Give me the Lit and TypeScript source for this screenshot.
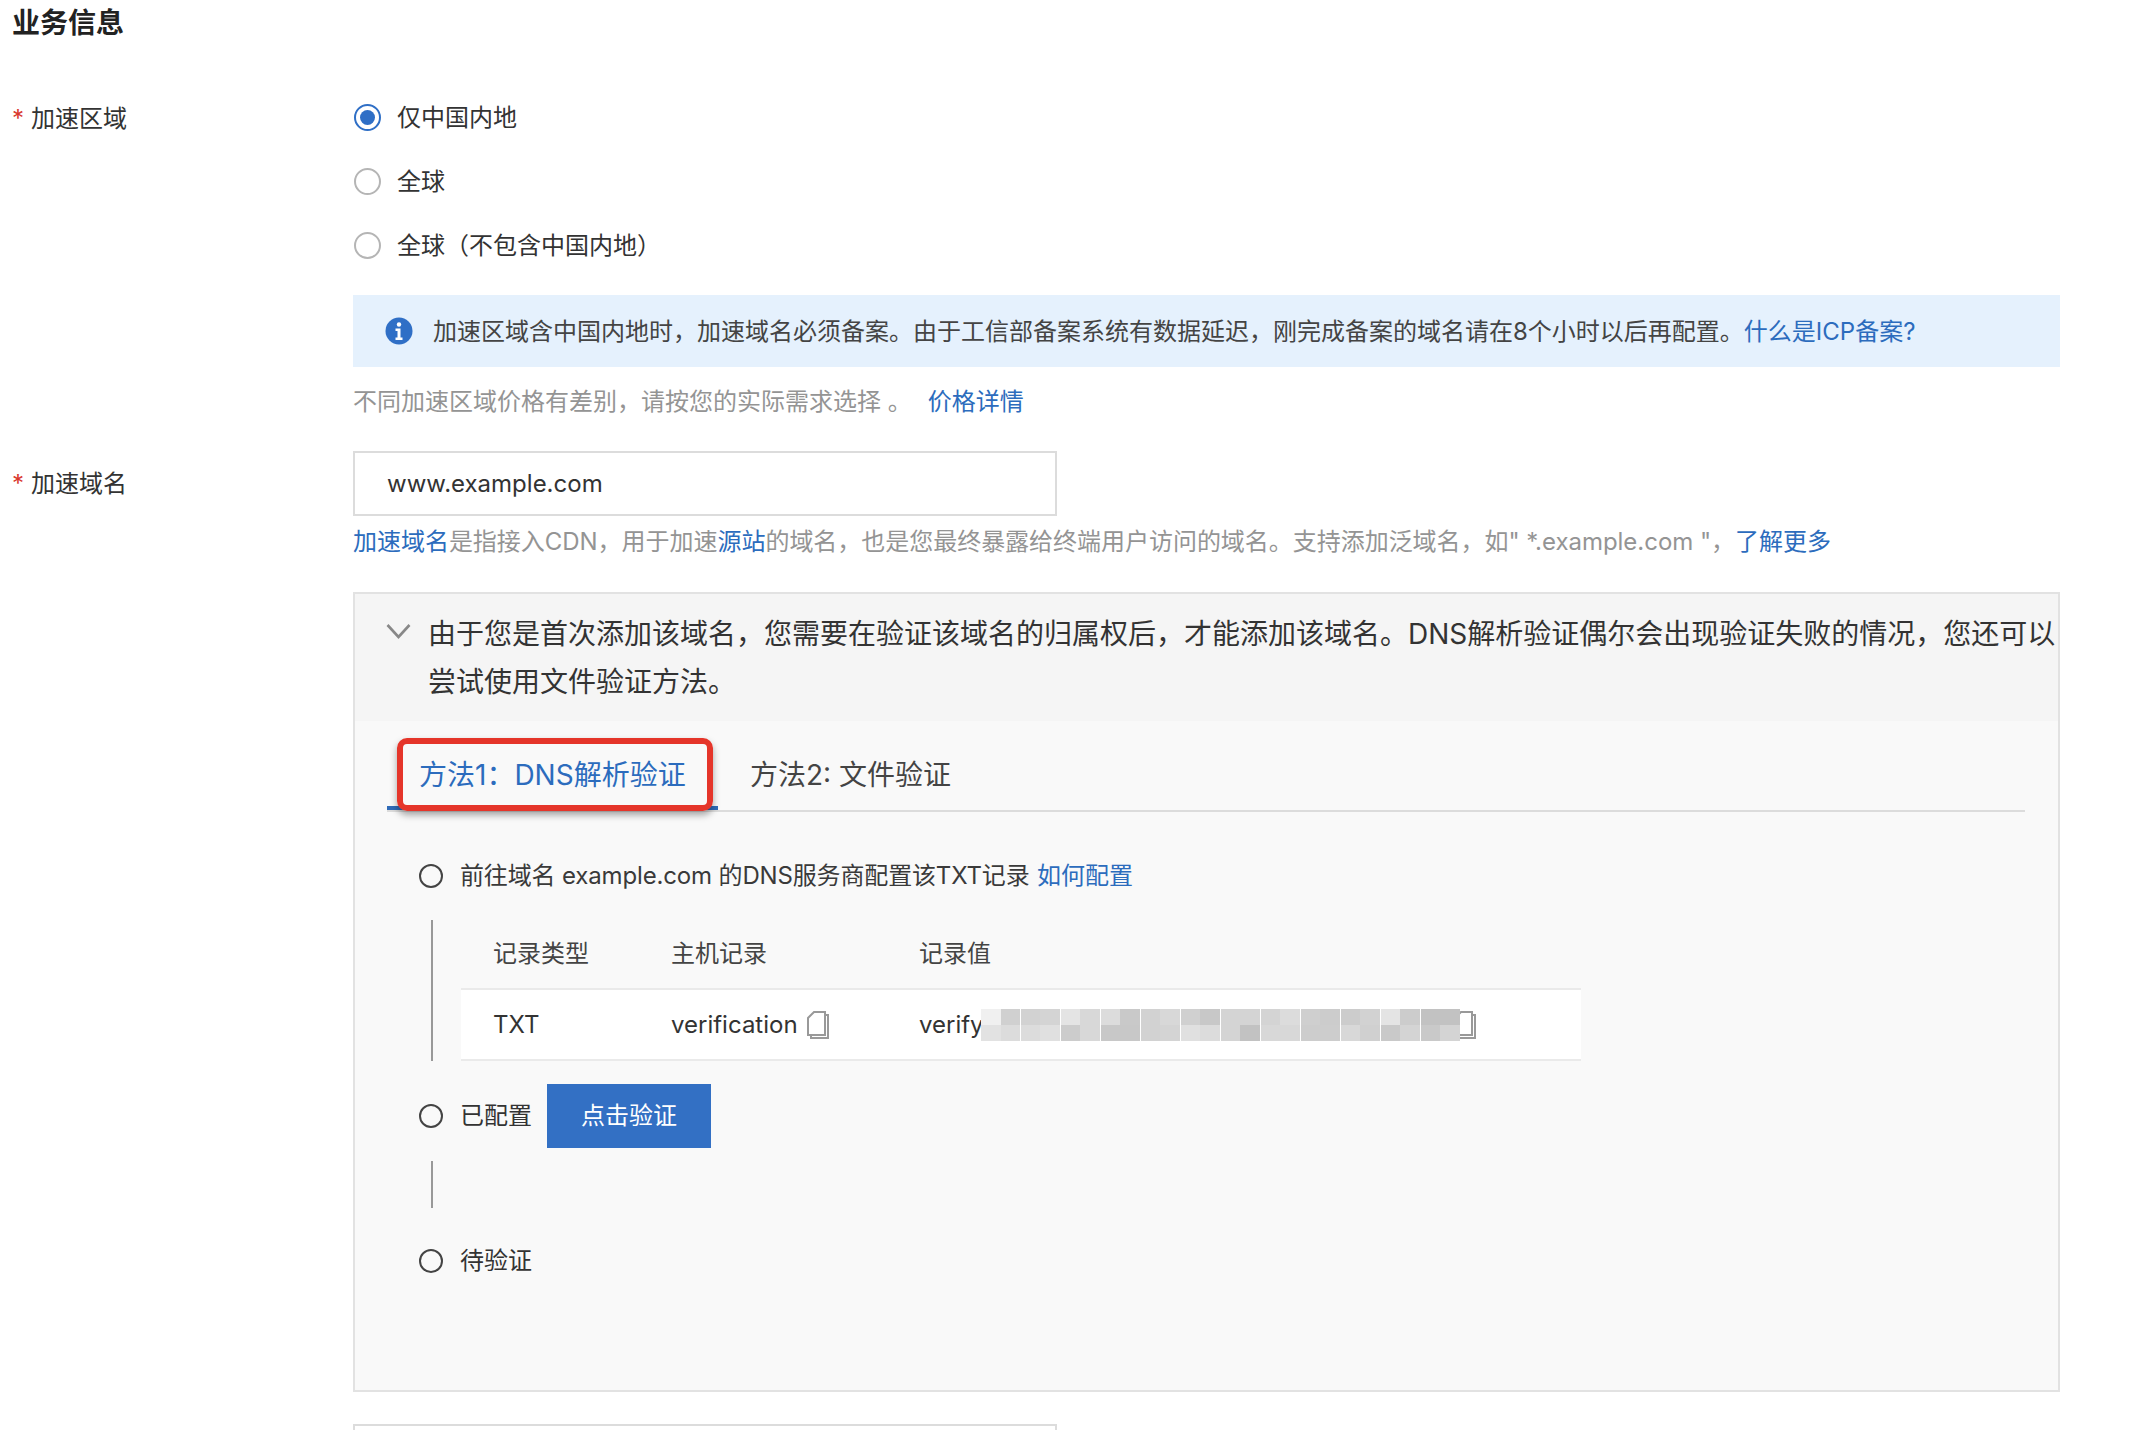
import { LitElement, html, css, svg } from "lit";
import { customElement } from "lit/decorators.js";

const ROW1 = ["f0","d0","d2","d4","e4","d8","dc","c9","d2","d8","d0","c8","d4","d4","d4","dc","cf","cc","cc","d2","e4","cc","c2","c2"];
const ROW2 = ["e2","dc","dc","e0","cc","d8","c8","c8","d2","d4","e0","dc","d4","c2","d8","d8","cd","cd","d8","d0","c9","d4","c9","d4"];

const copyIcon = svg`<svg class="copy" viewBox="0 0 22 28" width="22" height="28" fill="none"><path d="M7 1h11v23H1V7z" stroke="#999" stroke-width="2"/><path d="M4 24v3h17V4h-3" stroke="#999" stroke-width="2"/></svg>`;

@customElement("app-root")
export class AppRoot extends LitElement {
  static styles = css`
    :host {
      display: block;
      box-sizing: border-box;
      width: 2146px;
      height: 1430px;
      overflow: hidden;
      padding: 0 86px 0 12px;
      background: #fff;
      color: #333;
      font-family: Inter, "Noto Sans CJK SC", sans-serif;
      font-size: 24px;
      line-height: 36px;
    }
    a { color: #2c6cbd; text-decoration: none; }
    h2 { margin: 0; height: 85px; padding-top: 3px; box-sizing: border-box; font-size: 28px; line-height: 40px; font-weight: 700; color: #222; }
    .row { display: grid; grid-template-columns: 341px 1fr; }
    .label { display: flex; gap: 6px; }
    .label.first { padding-top: 16px; }
    .label.second { padding-top: 15px; }
    .star { color: #d9382e; width: 13px; font-size: 24px; }
    .radios { display: flex; flex-direction: column; }
    .radio { height: 64px; display: flex; align-items: center; gap: 16px; padding-left: 1px; }
    .radio span:last-child { position: relative; top: 1px; }
    .dot { width: 27px; height: 27px; box-sizing: border-box; border: 2px solid #b5b5b5; border-radius: 50%; background: #fff; }
    .dot.on { border-color: #2f6fc6; display: flex; align-items: center; justify-content: center; }
    .dot.on::after { content: ""; width: 15px; height: 15px; border-radius: 50%; background: #2f6fc6; }
    .alert { margin-top: 18px; height: 72px; background: #e5f1fd; display: flex; align-items: center; gap: 20px; padding-left: 32px; color: #444; }
    .alert svg { flex: none; }
    .alert span { position: relative; top: 1px; }
    .hint { margin-top: 17px; color: #949494; }
    .hint a { margin-left: 16px; }
    .input { box-sizing: border-box; width: 704px; height: 65px; border: 2px solid #dcdcdc; background: #fff; padding: 0 32px; display: flex; align-items: center; color: #333; }
    .second-row { margin-top: 31px; }
    .help { margin-top: 8px; color: #949494; white-space: nowrap; letter-spacing: -0.03px; }
    .collapse { margin-top: 32px; height: 800px; box-sizing: border-box; border: 2px solid #e2e2e2; background: #f9f9f9; }
    .head { background: #f5f5f5; display: flex; padding: 16px 2px 15px 31px; gap: 17px; font-size: 28px; line-height: 48px; color: #333; }
    .head svg { flex: none; margin-top: 13px; }
    .body { padding: 18px 33px 0 32px; }
    .tabs { display: flex; border-bottom: 2px solid #dcdcdc; height: 71px; font-size: 28px; line-height: 72px; }
    .tab { position: relative; padding: 0 33px 0 32px; color: #444; white-space: nowrap; }
    .tab.active { color: #2c6cbd; border-bottom: 4px solid #2f6bb8; height: 71px; box-sizing: border-box; width: 331px; padding-right: 0; }
    .mark { position: absolute; left: 10px; top: -1px; width: 316px; height: 73px; box-sizing: border-box; border: 6px solid #e5352a; border-radius: 10px; box-shadow: 0 4px 7px rgba(0,0,0,.35); }
    .steps { padding-left: 32px; }
    .step { display: flex; align-items: center; gap: 17px; }
    .circle { flex: none; width: 24px; height: 24px; box-sizing: border-box; border: 2px solid #444; border-radius: 50%; }
    .s1 { margin-top: 46px; color: #3a3a3a; letter-spacing: -0.15px; }
    .s1 a { margin-left: 1px; letter-spacing: 0; }
    .rail { margin: 26px 0 0 12px; border-left: 2px solid #999; padding-left: 28px; height: 141px; }
    .table { width: 1120px; color: #444; }
    .tr { display: grid; grid-template-columns: 178px 248px 1fr; padding-left: 32px; align-items: center; }
    .th { height: 68px; }
    .td { height: 73px; box-sizing: border-box; background: #fff; border-top: 2px solid #eaeaea; border-bottom: 2px solid #eaeaea; color: #333; }
    .cell { display: flex; align-items: center; }
    .cell .copy { margin-left: 9px; }
    .mask { position: relative; z-index: 1; width: 479px; height: 32px; display: grid; grid-template-columns: repeat(24, 1fr); grid-auto-rows: 16px; margin-left: -3px; flex: none; }
    .mask::after { content: ""; position: absolute; inset: 0; background: repeating-linear-gradient(90deg, transparent 0 39px, #fff 39px 40px); }
    .mask i { display: block; }
    .cell.value .copy { margin-left: -6px; }
    .s2 { margin-top: 23px; gap: 17px; }
    .btn { margin-left: -2px; width: 164px; height: 64px; background: #3370c4; color: #fff; display: flex; align-items: center; justify-content: center; }
    .s2 .txt { width: 72px; }
    .short { margin: 13px 0 0 12px; height: 47px; border-left: 2px solid #999; }
    .s3 { margin-top: 35px; }
    .bottom { margin: 32px 0 0 341px; }
  `;

  render() {
    return html`
      <h2>业务信息</h2>
      <div class="row">
        <div class="label first"><span class="star">*</span>加速区域</div>
        <div>
          <div class="radios">
            <div class="radio"><span class="dot on"></span><span>仅中国内地</span></div>
            <div class="radio"><span class="dot"></span><span>全球</span></div>
            <div class="radio"><span class="dot"></span><span>全球（不包含中国内地）</span></div>
          </div>
          <div class="alert">
            <svg width="28" height="28" viewBox="0 0 28 28"><circle cx="14" cy="14" r="13.5" fill="#2f6fc6"/><circle cx="14" cy="7.5" r="2.2" fill="#fff"/><path d="M10.5 11.5h5v9h2v2.5h-7v-2.5h2v-6.5h-2z" fill="#fff"/></svg>
            <span>加速区域含中国内地时，加速域名必须备案。由于工信部备案系统有数据延迟，刚完成备案的域名请在8个小时以后再配置。<a>什么是ICP备案?</a></span>
          </div>
          <div class="hint">不同加速区域价格有差别，请按您的实际需求选择 。<a>价格详情</a></div>
        </div>
      </div>
      <div class="row second-row">
        <div class="label second"><span class="star">*</span>加速域名</div>
        <div>
          <div class="input">www.example.com</div>
          <div class="help"><a>加速域名</a>是指接入CDN，用于加速<a>源站</a>的域名，也是您最终暴露给终端用户访问的域名。支持添加泛域名，如" *.example.com "，<a>了解更多</a></div>
          <div class="collapse">
            <div class="head">
              <svg width="25" height="16" viewBox="0 0 25 16" fill="none"><path d="M1.5 2l11 12 11-12" stroke="#888" stroke-width="2.6"/></svg>
              <span>由于您是首次添加该域名，您需要在验证该域名的归属权后，才能添加该域名。DNS解析验证偶尔会出现验证失败的情况，您还可以尝试使用文件验证方法。</span>
            </div>
            <div class="body">
              <div class="tabs">
                <div class="tab active">方法1：DNS解析验证<span class="mark"></span></div>
                <div class="tab">方法2: 文件验证</div>
              </div>
              <div class="steps">
                <div class="step s1"><span class="circle"></span><span>前往域名 example.com 的DNS服务商配置该TXT记录 <a>如何配置</a></span></div>
                <div class="rail">
                  <div class="table">
                    <div class="tr th"><span>记录类型</span><span>主机记录</span><span>记录值</span></div>
                    <div class="tr td">
                      <span>TXT</span>
                      <span class="cell">verification${copyIcon}</span>
                      <span class="cell value">verify<span class="mask">${[...ROW1, ...ROW2].map(
                        (c) => html`<i style="background:#${c}${c}${c}"></i>`
                      )}</span>${copyIcon}</span>
                    </div>
                  </div>
                </div>
                <div class="step s2"><span class="circle"></span><span class="txt">已配置</span><span class="btn">点击验证</span></div>
                <div class="short"></div>
                <div class="step s3"><span class="circle"></span><span>待验证</span></div>
              </div>
            </div>
          </div>
        </div>
      </div>
      <div class="input bottom"></div>
    `;
  }
}
